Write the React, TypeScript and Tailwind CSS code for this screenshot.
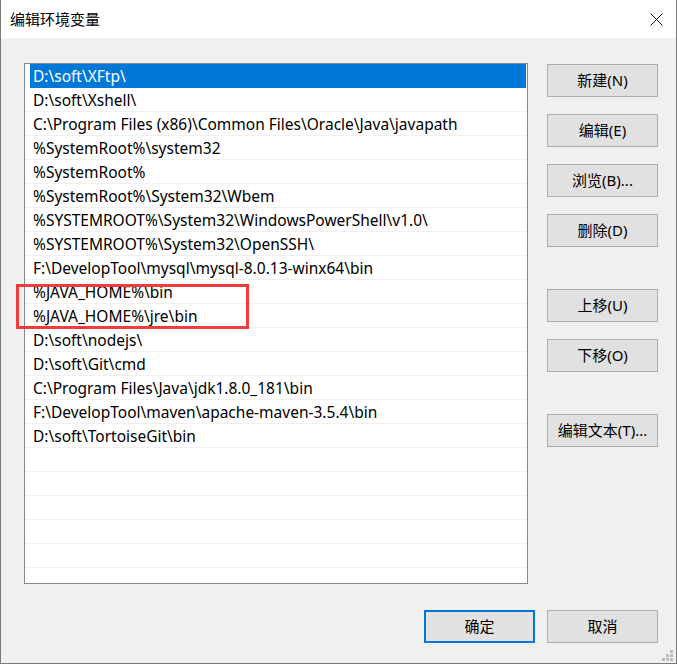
import React from "react";

const paths = [
  "D:\\soft\\XFtp\\",
  "D:\\soft\\Xshell\\",
  "C:\\Program Files (x86)\\Common Files\\Oracle\\Java\\javapath",
  "%SystemRoot%\\system32",
  "%SystemRoot%",
  "%SystemRoot%\\System32\\Wbem",
  "%SYSTEMROOT%\\System32\\WindowsPowerShell\\v1.0\\",
  "%SYSTEMROOT%\\System32\\OpenSSH\\",
  "F:\\DevelopTool\\mysql\\mysql-8.0.13-winx64\\bin",
  "%JAVA_HOME%\\bin",
  "%JAVA_HOME%\\jre\\bin",
  "D:\\soft\\nodejs\\",
  "D:\\soft\\Git\\cmd",
  "C:\\Program Files\\Java\\jdk1.8.0_181\\bin",
  "F:\\DevelopTool\\maven\\apache-maven-3.5.4\\bin",
  "D:\\soft\\TortoiseGit\\bin",
];

const font = {
  fontFamily: '"Noto Sans", "Noto Sans CJK SC", sans-serif',
};

function Button({
  children,
  primary = false,
}: {
  children: React.ReactNode;
  primary?: boolean;
}) {
  return (
    <button
      className={
        primary
          ? "flex h-[33px] w-[111px] items-center justify-center border-2 border-[#0078d7] bg-[#e1e1e1] text-[15px] leading-none text-black"
          : "flex h-[33px] w-[111px] items-center justify-center border border-[#adadad] bg-[#e1e1e1] text-[15px] leading-none text-black"
      }
    >
      {children}
    </button>
  );
}

function PathRow({ text, selected }: { text?: string; selected?: boolean }) {
  if (selected) {
    return (
      <div className="flex h-[24px] shrink-0">
        <div className="ml-[5px] mr-[1px] flex flex-1 items-center bg-[#0078d7] pl-[3px] pt-[2px] text-white">
          {text}
        </div>
      </div>
    );
  }
  return (
    <div className="flex h-[24px] shrink-0 items-center border-b border-[#f0f0f0] pl-[8px] pt-[2px] text-black">
      {text}
    </div>
  );
}

export default function App() {
  const empty = Array.from({ length: 7 });

  return (
    <div
      className="relative flex h-[664px] w-[677px] flex-col border-x border-b border-[#7a7a7a] bg-[#f0f0f0]"
      style={font}
    >
      {/* title bar */}
      <div className="flex h-[38px] shrink-0 items-center justify-between bg-white pl-[9px] pr-[13px]">
        <span className="text-[15px] text-black">编辑环境变量</span>
        <svg width="13" height="13" viewBox="0 0 13 13" className="mt-[1px]">
          <path d="M0.5 0.5 L12.5 12.5 M12.5 0.5 L0.5 12.5" stroke="#111" strokeWidth="1" />
        </svg>
      </div>

      {/* body */}
      <div className="flex pl-[23px] pt-[25px]">
        <div className="flex h-[521px] w-[504px] flex-col overflow-hidden border border-[#828790] bg-white text-[15.5px] leading-none">
          {paths.map((p, i) => (
            <PathRow key={p} text={p} selected={i === 0} />
          ))}
          {empty.map((_, i) => (
            <PathRow key={"e" + i} />
          ))}
        </div>

        <div className="ml-[19px] flex flex-col pt-[1px]">
          <Button>新建(N)</Button>
          <div className="mt-[17px]">
            <Button>编辑(E)</Button>
          </div>
          <div className="mt-[17px]">
            <Button>浏览(B)...</Button>
          </div>
          <div className="mt-[17px]">
            <Button>删除(D)</Button>
          </div>
          <div className="mt-[42px]">
            <Button>上移(U)</Button>
          </div>
          <div className="mt-[17px]">
            <Button>下移(O)</Button>
          </div>
          <div className="mt-[42px]">
            <Button>编辑文本(T)...</Button>
          </div>
        </div>
      </div>

      {/* footer */}
      <div className="mt-[26px] flex justify-end gap-[12px] pr-[18px]">
        <Button primary>确定</Button>
        <Button>取消</Button>
      </div>

      {/* annotation */}
      <div className="absolute left-[15px] top-[284px] h-[45px] w-[233px] border-[3px] border-[#f23c3c]" />

      {/* resize grip */}
      <div className="absolute bottom-[2px] right-[3px] grid grid-cols-3 gap-[1px]">
        <span className="h-[3px] w-[3px]" />
        <span className="h-[3px] w-[3px]" />
        <span className="h-[3px] w-[3px] bg-[#bcbcbc]" />
        <span className="h-[3px] w-[3px]" />
        <span className="h-[3px] w-[3px] bg-[#bcbcbc]" />
        <span className="h-[3px] w-[3px] bg-[#bcbcbc]" />
        <span className="h-[3px] w-[3px] bg-[#bcbcbc]" />
        <span className="h-[3px] w-[3px] bg-[#bcbcbc]" />
        <span className="h-[3px] w-[3px] bg-[#bcbcbc]" />
      </div>
    </div>
  );
}
